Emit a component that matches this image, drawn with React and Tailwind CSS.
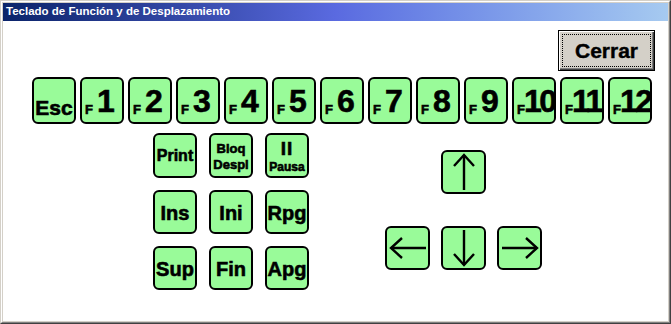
import { Fragment } from "react";

const fnKeys = ["1", "2", "3", "4", "5", "6", "7", "8", "9", "10", "11", "12"];

const Key = ({ className = "", children }) => (
  <div
    className={`flex items-center justify-center overflow-hidden rounded-[6px] border-2 border-black bg-[#99fb99] text-black font-bold leading-none [-webkit-text-stroke:0.6px_black] ${className}`}
  >
    {children}
  </div>
);

const Arrow = ({ dir }) => {
  const rot = { up: 0, down: 180, left: 270, right: 90 }[dir];
  return (
    <svg width="38" height="38" viewBox="0 0 38 38" style={{ transform: `rotate(${rot}deg)` }}>
      <line x1="19" y1="2" x2="19" y2="37" stroke="black" strokeWidth="2.4" />
      <path d="M9 13 L19 2 L29 13" fill="none" stroke="black" strokeWidth="2.4" />
    </svg>
  );
};

export default function App() {
  return (
    <div className="w-[671px] h-[324px] bg-[#d4d0c8] border-t border-l border-t-[#d4d0c8] border-l-[#d4d0c8] border-r border-b border-r-[#404040] border-b-[#404040]">
      <div className="flex h-full flex-col border-t border-l border-t-white border-l-white border-r border-b border-r-[#808080] border-b-[#808080] p-px">
        {/* Title bar */}
        <div className="flex h-[18px] items-center bg-gradient-to-r from-[#0a246a] via-[#5a6ae0] to-[#a6caf0] px-[3px] font-['Liberation_Sans',sans-serif] text-[11.5px] font-bold text-white">
          Teclado de Función y de Desplazamiento
        </div>

        {/* Client area */}
        <div className="flex-1 bg-white font-['Liberation_Sans',sans-serif]">
          <div className="flex justify-end pr-[13px] pt-[9px]">
            <button className="flex h-[41px] w-[97px] items-center justify-center border border-black bg-[#d4d0c8] p-[3px] shadow-[inset_1px_1px_0_#fff,inset_-1px_-1px_0_#404040,inset_-2px_-2px_0_#808080]">
              <span className="flex h-full w-full items-center justify-center border border-dotted border-black text-[21px] font-bold text-black [-webkit-text-stroke:0.4px_black]">
                Cerrar
              </span>
            </button>
          </div>

          {/* Function row */}
          <div className="mt-[6px] flex gap-[4px] pl-[29px]">
            <Key className="h-[47px] w-[44px] pt-[14px] text-[21px]">Esc</Key>
            {fnKeys.map((n) => (
              <Key key={n} className="h-[47px] w-[44px] items-end justify-start pb-[5px] pl-[3px]">
                <span className="mb-[1px] text-[13px]">F</span>
                <span
                  className={
                    n.length > 1
                      ? "-ml-[1px] text-[32px] tracking-[-2.5px]"
                      : "ml-[4px] text-[32px]"
                  }
                >
                  {n}
                </span>
              </Key>
            ))}
          </div>

          {/* Lower section */}
          <div className="mt-[9px] flex pl-[150px]">
            <div className="grid grid-cols-[44px_44px_44px] gap-x-[12px] gap-y-[12px]">
              <Key className="h-[45px] text-[16px]">Print</Key>
              <Key className="h-[45px] flex-col gap-[3px] pt-[2px] text-[13px]">
                <span>Bloq</span>
                <span>Despl</span>
              </Key>
              <Key className="h-[45px] flex-col gap-[3px] pt-[1px]">
                <span className="text-[19px] tracking-[1px]">II</span>
                <span className="text-[12px]">Pausa</span>
              </Key>
              {["Ins", "Ini", "Rpg", "Sup", "Fin", "Apg"].map((t) => (
                <Fragment key={t}>
                  <Key className="h-[44px] pt-[2px] text-[20px]">{t}</Key>
                </Fragment>
              ))}
            </div>

            <div className="ml-[76px] mt-[17px] grid grid-cols-[45px_45px_45px] gap-x-[11px] gap-y-[12px]">
              <div />
              <Key className="h-[44px]">
                <Arrow dir="up" />
              </Key>
              <div />
              <Key className="h-[44px]">
                <Arrow dir="left" />
              </Key>
              <Key className="h-[44px]">
                <Arrow dir="down" />
              </Key>
              <Key className="h-[44px]">
                <Arrow dir="right" />
              </Key>
            </div>
          </div>
        </div>
      </div>
    </div>
  );
}
